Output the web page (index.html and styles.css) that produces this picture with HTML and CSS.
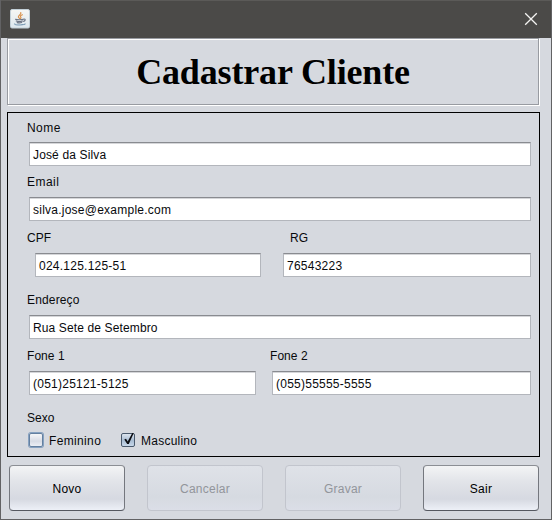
FILE: index.html
```html
<!DOCTYPE html>
<html lang="pt-BR">
<head>
<meta charset="utf-8">
<title>Cadastrar Cliente</title>
<link rel="stylesheet" href="styles.css">
</head>
<body>
<div class="window">
  <header class="titlebar">
    <svg class="java" width="20" height="20" viewBox="0 0 20 20">
      <defs><linearGradient id="tile" x1="0" y1="0" x2="0" y2="1"><stop offset="0" stop-color="#f6f6f4"/><stop offset="1" stop-color="#dce7ee"/></linearGradient></defs>
      <rect x=".5" y=".5" width="19" height="18.5" rx="1.5" fill="url(#tile)" stroke="#c3d0d8"/>
      <g fill="none" stroke-linecap="round">
        <path d="M10.8 3.6c1 2-3 2.600-2.400 4.400.2.7.9 1 1.100 1.500M12.400 5.800c-2.400 1-2.300 1.600-1.500 2.500.3.5 0 .8-.4 1.200" stroke="#d9924e" stroke-width="1.200"/>
        <path d="M5.500 10.200c1.500.7 6.200.6 7.800 0M6.200 12c1.700.6 4.800.6 6.300 0M7.200 13.600c1.300.4 3.300.4 4.500 0M13.800 10.100c2-.3 1.800 1.700-.2 2.300" stroke="#6d7585" stroke-width="1.100"/>
        <path d="M4.400 14.800c-1.800 1.300 7.700 1.800 10.800.3" stroke="#668ba9"/>
      </g>
    </svg>
    <svg class="close" width="14" height="14" viewBox="0 0 14 14"><path d="M1.200 1.200l11.600 11.600M12.800 1.200L1.200 12.800" stroke="#f4f4f2" stroke-width="1.300"/></svg>
  </header>
  <main class="content">
    <div class="banner"><h1>Cadastrar Cliente</h1></div>
    <form class="panel">
      <div class="group nome"><label>Nome</label><div class="field">José da Silva</div></div>
      <div class="group email"><label>Email</label><div class="field">silva.jose@example.com</div></div>
      <div class="row ids">
        <div class="group cpf"><label>CPF</label><div class="field">024.125.125-51</div></div>
        <div class="group rg"><label>RG</label><div class="field">76543223</div></div>
      </div>
      <div class="group endereco"><label>Endereço</label><div class="field">Rua Sete de Setembro</div></div>
      <div class="row phones">
        <div class="group fone1"><label>Fone 1</label><div class="field">(051)25121-5125</div></div>
        <div class="group fone2"><label>Fone 2</label><div class="field">(055)55555-5555</div></div>
      </div>
      <label class="sexo">Sexo</label>
      <div class="row checks">
        <span class="check fem"><i class="box focus"></i>Feminino</span>
        <span class="check"><i class="box on"><svg width="12" height="14" viewBox="0 0 12 14"><path d="M1.300 7.400L3 6.700l1.700 2.800L9.300 1l1.400.2L5.800 12H4.200z" fill="#0b0d12"/></svg></i>Masculino</span>
      </div>
    </form>
    <div class="buttons">
      <button>Novo</button><button disabled>Cancelar</button><button disabled>Gravar</button><button>Sair</button>
    </div>
  </main>
</div>
</body>
</html>
```

FILE: styles.css
```css
* { box-sizing: border-box; }
body { margin: 0; font: 12px/14px "Liberation Sans", Arial, sans-serif; letter-spacing: .24px; color: #08090c; }
.window { width: 552px; height: 520px; background: #d6d9df; overflow: hidden; border: 1px solid #626264; border-top: 0; }
.titlebar { height: 38px; margin: 0 -1px; padding: 9px 14px 0 10px; display: flex; justify-content: space-between; background: #4b4a48; border-top: 1px solid #5b5a58; }
.titlebar svg { display: block; }
.titlebar .java { margin-top: -1px; }
.titlebar .close { margin-top: 2px; }
.content { padding: 0 11px 0 6px; }
.banner { width: 532px; height: 67px; border: 1px solid #989ba1; box-shadow: inset 1px 1px #fff, 1px 1px #fff; }
h1 { margin: 0; padding-top: 13px; text-align: center; font: bold 36px/41px "Liberation Serif", "Times New Roman", serif; letter-spacing: -.15px; color: #000; }
.panel { width: 533px; height: 345px; margin-top: 7px; border: 1px solid #000; padding: 8px 8px 0 19px; }
.row { display: flex; }
label { display: block; }
.field { height: 24px; margin: 7px 0 0 2px; padding: 5px 3px 0; background: #fff; border: 1px solid #b3b6bc; border-top-color: #898b90; box-shadow: inset 0 1px #d5d6d9; white-space: nowrap; }
.group { width: 504px; }
.nome label, .email label { letter-spacing: .45px; }
.nome .field { letter-spacing: .15px; }
.email { margin-top: 9px; }
.email .field { margin-top: 8px; }
.ids { margin-top: 10px; }
.ids .field { margin-top: 8px; }
.cpf { width: 234px; }
.cpf label { letter-spacing: 0; }
.cpf .field { margin-left: 8px; }
.rg { width: 248px; margin-left: 22px; }
.rg label { padding-left: 7px; letter-spacing: 0; }
.rg .field { margin-left: 0; }
.endereco { margin-top: 16px; }
.endereco label { letter-spacing: .15px; }
.endereco .field { margin-top: 8px; letter-spacing: .13px; }
.phones { margin-top: 10px; }
.phones label { letter-spacing: .05px; }
.phones .field { margin-top: 8px; }
.fone1 { width: 229px; }
.fone2 { width: 261px; margin-left: 14px; }
.sexo { margin-top: 16px; letter-spacing: 0; }
.checks { margin-top: 6px; height: 18px; padding-left: 1px; }
.check { display: flex; align-items: center; height: 18px; padding-top: 1px; }
.fem { width: 92px; letter-spacing: .35px; }
.box { position: relative; width: 14px; height: 14px; margin: -1px 6px 0 1px; border: 1px solid #62666e; border-radius: 2px; background: linear-gradient(#f5f6f8, #d8dce5 60%, #eceff5); }
.box.focus { border-color: #6480a0; box-shadow: 0 0 0 1px #86a1c0; }
.box.on { background: linear-gradient(#dce4ee, #a9bdd3 55%, #c8d8ea); border-color: #49596c; }
.box svg { position: absolute; left: 1px; top: -2px; }
.buttons { display: flex; gap: 22px; margin: 8px 0 0 2px; }
button { flex: none; width: 116px; height: 46px; padding: 2px 0 0; font: inherit; letter-spacing: inherit; color: #000; border: 1px solid #7b7e85; border-color: #8b8e94 #74777e #555860; border-radius: 4px; background: linear-gradient(#f3f4f5, #e2e4e9 35%, #d6d9e1 75%, #edf0f7); }
button:disabled { color: #92959b; border-color: #c2c5cd; background: linear-gradient(#dfe2e8, #d6dae1 70%, #dbdee7); }
```
